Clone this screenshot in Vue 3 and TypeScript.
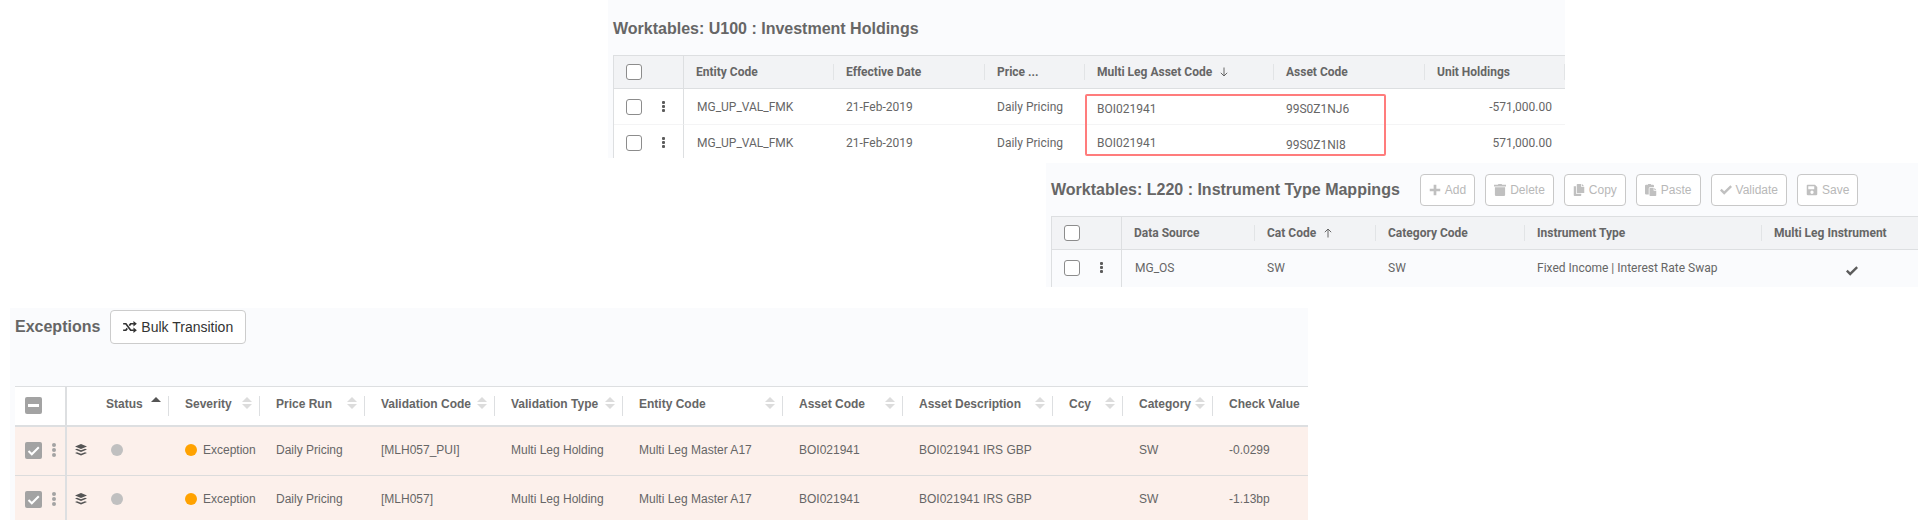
<script setup lang="ts">
interface Holding {
  entity: string
  date: string
  price: string
  multiLeg: string
  asset: string
  units: string
}

interface ExceptionColumn {
  label: string
  sort: 'asc' | 'none' | 'hidden'
  width: number
}

interface ExceptionRow {
  severity: string
  cells: string[]
}

const holdings: Holding[] = [
  { entity: 'MG_UP_VAL_FMK', date: '21-Feb-2019', price: 'Daily Pricing', multiLeg: 'BOI021941', asset: '99S0Z1NJ6', units: '-571,000.00' },
  { entity: 'MG_UP_VAL_FMK', date: '21-Feb-2019', price: 'Daily Pricing', multiLeg: 'BOI021941', asset: '99S0Z1NI8', units: '571,000.00' },
]

const actions: { label: string; icon: string }[] = [
  { label: 'Add', icon: 'M6.200 1h3.600v5.200H15v3.600H9.800V15H6.200V9.800H1V6.200h5.200z' },
  { label: 'Delete', icon: 'M0 1h5l1-1h4l1 1h5v2.200H0zM1.200 4.200h13.600V14.500a1.500 1.500 0 0 1-1.500 1.500H2.700a1.500 1.500 0 0 1-1.500-1.500z' },
  { label: 'Copy', icon: 'M6 0h5v4h4v8H5V1a1 1 0 0 1 1-1zM12 0l3 3h-3zM1 3h3v10h7v2a1 1 0 0 1-1 1H2a1 1 0 0 1-1-1z' },
  { label: 'Paste', icon: 'M1.500 1H4a2 2 0 0 1 4 0h2.500A1.500 1.500 0 0 1 12 2.500V4H7a2 2 0 0 0-2 2v8H1.500A1.500 1.500 0 0 1 0 12.500v-10A1.500 1.500 0 0 1 1.500 1zM7 5h4.500v4H15v6a1 1 0 0 1-1 1H7a1 1 0 0 1-1-1V6a1 1 0 0 1 1-1zM12.500 5L15 8h-2.500z' },
  { label: 'Validate', icon: 'M0 8.500L2.200 6.200 5.600 9.600 13.800 1.800 16 4 5.600 14.200z' },
  { label: 'Save', icon: 'M2 1h10l3 3v9.500a1.500 1.500 0 0 1-1.500 1.500h-11A1.500 1.500 0 0 1 1 13.500V2a1 1 0 0 1 1-1zM3 3v4h8V3zM8 8.800a2.200 2.200 0 1 0 0 4.400 2.200 2.200 0 0 0 0-4.400z' },
]

const exceptionColumns: ExceptionColumn[] = [
  { label: 'Status', sort: 'asc', width: 79 },
  { label: 'Severity', sort: 'none', width: 91 },
  { label: 'Price Run', sort: 'none', width: 105 },
  { label: 'Validation Code', sort: 'none', width: 130 },
  { label: 'Validation Type', sort: 'none', width: 128 },
  { label: 'Entity Code', sort: 'none', width: 160 },
  { label: 'Asset Code', sort: 'none', width: 120 },
  { label: 'Asset Description', sort: 'none', width: 150 },
  { label: 'Ccy', sort: 'none', width: 70 },
  { label: 'Category', sort: 'none', width: 90 },
  { label: 'Check Value', sort: 'hidden', width: 0 },
]

const exceptionRows: ExceptionRow[] = [
  { severity: 'Exception', cells: ['Daily Pricing', '[MLH057_PUI]', 'Multi Leg Holding', 'Multi Leg Master A17', 'BOI021941', 'BOI021941 IRS GBP', '', 'SW', '-0.0299'] },
  { severity: 'Exception', cells: ['Daily Pricing', '[MLH057]', 'Multi Leg Holding', 'Multi Leg Master A17', 'BOI021941', 'BOI021941 IRS GBP', '', 'SW', '-1.13bp'] },
]
</script>

<template>
  <main class="page">
    <section class="panel holdings">
      <h2 class="title">Worktables: U100 : Investment Holdings</h2>
      <div class="marked">
        <table class="grid">
          <colgroup>
            <col class="w-select" />
            <col class="w-150" />
            <col class="w-151" />
            <col class="w-100" />
            <col class="w-189" />
            <col class="w-151" />
            <col />
          </colgroup>
          <thead>
            <tr>
              <th class="pick"><input type="checkbox" class="tick" aria-label="Select all holdings" /></th>
              <th><span class="head">Entity Code</span></th>
              <th><span class="head">Effective Date</span></th>
              <th><span class="head">Price ...</span></th>
              <th>
                <span class="head">Multi Leg Asset Code
                  <svg class="arrow" viewBox="0 0 8 10" aria-hidden="true"><path d="M4 .5v8.500M.8 5.800L4 9l3.200-3.200" /></svg>
                </span>
              </th>
              <th><span class="head">Asset Code</span></th>
              <th><span class="head">Unit Holdings</span></th>
            </tr>
          </thead>
          <tbody>
            <tr v-for="(row, i) in holdings" :key="i">
              <td class="pick">
                <div class="pick-row">
                  <input type="checkbox" class="tick" :aria-label="`Select ${row.asset}`" />
                  <button type="button" class="kebab" :aria-label="`Menu for ${row.asset}`"><i></i><i></i><i></i></button>
                </div>
              </td>
              <td class="code">{{ row.entity }}</td>
              <td>{{ row.date }}</td>
              <td>{{ row.price }}</td>
              <td :class="{ low: i === 0 }">{{ row.multiLeg }}</td>
              <td class="low">{{ row.asset }}</td>
              <td class="num">{{ row.units }}</td>
            </tr>
          </tbody>
        </table>
        <div class="callout"></div>
      </div>
    </section>

    <section class="panel mappings">
      <div class="bar">
        <h2 class="title">Worktables: L220 : Instrument Type Mappings</h2>
        <div class="actions">
          <button v-for="a in actions" :key="a.label" type="button" class="action" disabled>
            <svg viewBox="0 0 16 16" aria-hidden="true"><path fill-rule="evenodd" :d="a.icon" /></svg>{{ a.label }}
          </button>
        </div>
      </div>
      <table class="grid">
        <colgroup>
          <col class="w-select" />
          <col class="w-133" />
          <col class="w-121" />
          <col class="w-149" />
          <col class="w-237" />
          <col />
        </colgroup>
        <thead>
          <tr>
            <th class="pick"><input type="checkbox" class="tick" aria-label="Select all mappings" /></th>
            <th><span class="head">Data Source</span></th>
            <th>
              <span class="head">Cat Code
                <svg class="arrow" viewBox="0 0 8 10" aria-hidden="true"><path d="M4 9.500V1M.8 4.200L4 1l3.200 3.200" /></svg>
              </span>
            </th>
            <th><span class="head">Category Code</span></th>
            <th><span class="head">Instrument Type</span></th>
            <th><span class="head open">Multi Leg Instrument</span></th>
          </tr>
        </thead>
        <tbody>
          <tr>
            <td class="pick">
              <div class="pick-row">
                <input type="checkbox" class="tick" aria-label="Select MG_OS" />
                <button type="button" class="kebab" aria-label="Menu for MG_OS"><i></i><i></i><i></i></button>
              </div>
            </td>
            <td class="code">MG_OS</td>
            <td>SW</td>
            <td>SW</td>
            <td>Fixed Income | Interest Rate Swap</td>
            <td class="flag low">
              <svg viewBox="0 0 16 16" role="img" aria-label="Yes"><path d="M0 8.500L2.200 6.200 5.600 9.600 13.800 1.800 16 4 5.600 14.200z" /></svg>
            </td>
          </tr>
        </tbody>
      </table>
    </section>

    <section class="panel exceptions">
      <div class="bar">
        <h2 class="title">Exceptions</h2>
        <button type="button" class="bulk">
          <svg viewBox="0 0 16 14" aria-hidden="true">
            <path class="line" d="M0 3.200h3.200L8.800 10.800H12.500M0 10.800h3.200l1.600-2.200M7.200 5.400L8.800 3.200H12.500" />
            <path d="M12 0l4 3.200-4 3.200zM12 7.600l4 3.200-4 3.200z" />
          </svg>Bulk Transition
        </button>
      </div>
      <table class="list">
        <colgroup>
          <col class="w-mark" />
          <col class="w-layers" />
          <col v-for="c in exceptionColumns" :key="c.label" :style="c.width ? { width: c.width + 'px' } : {}" />
        </colgroup>
        <thead>
          <tr>
            <th class="mark"><input type="checkbox" class="box partial" aria-label="Select all exceptions" /></th>
            <th></th>
            <th v-for="c in exceptionColumns" :key="c.label">
              <div class="head" :class="{ last: c.sort === 'hidden' }">
                {{ c.label }}
                <svg v-if="c.sort !== 'hidden'" class="sort" :class="c.sort" viewBox="0 0 10 12" aria-hidden="true">
                  <path d="M0 5L5 0l5 5z" />
                  <path v-if="c.sort === 'none'" d="M0 7l5 5 5-5z" />
                </svg>
              </div>
            </th>
          </tr>
        </thead>
        <tbody>
          <tr v-for="(row, i) in exceptionRows" :key="i">
            <td class="mark">
              <div class="mark-row">
                <input type="checkbox" class="box" checked :aria-label="`Select exception ${i + 1}`" />
                <button type="button" class="kebab soft" :aria-label="`Menu for exception ${i + 1}`"><i></i><i></i><i></i></button>
              </div>
            </td>
            <td class="layers">
              <svg viewBox="0 0 12 12" aria-hidden="true">
                <path d="M6 0l6 2.500-6 2.500-6-2.500zM0 5.500l2-.8 4 1.600 4-1.600 2 .8L6 8zM0 9l2-.8 4 1.600 4-1.600 2 .8-6 2.500z" />
              </svg>
            </td>
            <td class="state"><span class="dot"></span></td>
            <td><span class="severity"><span class="dot warn"></span>{{ row.severity }}</span></td>
            <td v-for="(cell, j) in row.cells" :key="j">{{ cell }}</td>
          </tr>
        </tbody>
      </table>
    </section>
  </main>
</template>

<style>
body {
  background: #fff;
}
</style>

<style scoped>
.page {
  display: grid;
  grid-template-columns:
    minmax(0, 10fr) minmax(0, 598fr) minmax(0, 438fr) minmax(0, 262fr)
    minmax(0, 257fr) minmax(0, 353fr) minmax(0, 10fr);
  color: #666;
  font-family: "Liberation Sans", Arial, sans-serif;
}

.panel {
  padding-left: 5px;
  overflow: hidden;
  background: #fafbfd;
}

.holdings {
  grid-column: 3 / 6;
}

.mappings {
  grid-column: 4 / 7;
  margin-top: 5px;
}

.exceptions {
  grid-column: 2 / 5;
  margin-top: 21px;
}

.title {
  margin: 0;
  font-size: 16px;
  line-height: 20px;
  font-weight: 700;
  white-space: nowrap;
}

.holdings .title {
  padding: 19px 0 16px;
}

.bar {
  display: flex;
  align-items: center;
}

table {
  width: 100%;
  table-layout: fixed;
  border-collapse: separate;
  border-spacing: 0;
}

th,
td {
  box-sizing: border-box;
  padding: 0;
  text-align: left;
  white-space: nowrap;
}

/* Worktable grids */
.grid {
  border-top: 1px solid #dddfe1;
  border-left: 1px solid #dddfe1;
  font-family: Roboto, "Liberation Sans", sans-serif;
  font-size: 12px;
  line-height: 16px;
}

.grid th {
  height: 33px;
  padding-left: 12px;
  border-bottom: 1px solid #dddfe1;
  background: #f2f3f5;
  font-weight: 700;
}

.grid td {
  height: 36px;
  padding-left: 12px;
  border-bottom: 1px solid #f4f4f5;
}

.grid .code {
  padding-left: 13px;
}

.grid .low {
  padding-top: 5px;
}

.grid .num {
  padding-right: 13px;
  text-align: right;
}

.grid th .head {
  display: flex;
  align-items: center;
  height: 16px;
  border-right: 1px solid #e2e4e6;
}

.grid th .open {
  border-right: 0;
}

.grid .pick {
  padding-left: 12px;
  border-right: 1px solid #dddfe1;
}

.pick-row {
  display: flex;
  align-items: center;
  gap: 20px;
}

.holdings .grid td {
  background: #fff;
}

.marked {
  position: relative;
  margin-bottom: -3px;
}

.callout {
  position: absolute;
  top: 39px;
  left: 472px;
  box-sizing: border-box;
  width: 301px;
  height: 62px;
  border: 2px solid #ff7c7c;
  border-radius: 2px;
}

.mappings .grid td {
  height: 37px;
  padding-bottom: 2px;
  border-bottom: 0;
}

.w-select { width: 70px; }
.w-100 { width: 100px; }
.w-121 { width: 121px; }
.w-133 { width: 133px; }
.w-149 { width: 149px; }
.w-150 { width: 150px; }
.w-151 { width: 151px; }
.w-189 { width: 189px; }
.w-237 { width: 237px; }

.tick {
  appearance: none;
  display: block;
  box-sizing: border-box;
  width: 16px;
  height: 16px;
  margin: 0;
  border: 1px solid #8c8c8c;
  border-radius: 3px;
  background: #fff;
}

.kebab {
  display: flex;
  flex-direction: column;
  gap: 1px;
  padding: 0;
  border: 0;
  background: none;
}

.kebab i {
  width: 3px;
  height: 3px;
  border-radius: 1px;
  background: #5c5c5c;
}

.arrow {
  width: 8px;
  height: 10px;
  margin-left: 8px;
  fill: none;
  stroke: #666;
}

.grid .flag {
  padding-left: 24px;
  text-align: center;
}

.flag svg {
  width: 12px;
  height: 12px;
  vertical-align: middle;
  fill: #5c5c5c;
}

.mappings .bar {
  gap: 20px;
  padding: 11px 0 10px;
}

.actions {
  display: flex;
  gap: 10px;
}

.action {
  display: flex;
  align-items: center;
  gap: 4px;
  height: 32px;
  padding: 0 8px;
  border: 1px solid #c8c8c8;
  border-radius: 4px;
  background: #fff;
  color: #b8b8b8;
  font-family: "Liberation Sans", Arial, sans-serif;
  font-size: 12px;
}

.action svg {
  width: 12px;
  height: 12px;
  fill: #c0c0c0;
}

/* Exceptions list */
.exceptions .bar {
  gap: 10px;
  padding: 2px 0 42px;
}

.bulk {
  display: flex;
  align-items: center;
  gap: 4px;
  height: 34px;
  padding: 0 12px;
  border: 1px solid #ccc;
  border-radius: 4px;
  background: #fff;
  color: #333;
  font-family: "Liberation Sans", Arial, sans-serif;
  font-size: 14px;
}

.bulk svg {
  width: 14px;
  height: 12px;
  fill: #333;
}

.bulk .line {
  fill: none;
  stroke: #333;
  stroke-width: 2;
}

.list {
  margin-bottom: -5px;
  border-top: 1px solid #dddfe1;
  font-size: 12px;
  line-height: 16px;
}

.list th {
  height: 40px;
  border-bottom: 2px solid #dddfe1;
  background: #fff;
}

.list td {
  height: 49px;
  padding-bottom: 2px;
  padding-left: 16px;
  border-bottom: 1px solid #dcdcdc;
  background: #fcf0eb;
}

.list .head {
  display: flex;
  justify-content: space-between;
  box-sizing: border-box;
  height: 20px;
  padding: 0 7px 0 16px;
  border-right: 1px solid #dddfe1;
}

.list .last {
  border-right: 0;
}

.list .mark {
  padding-bottom: 2px;
  padding-left: 10px;
  border-right: 2px solid #dddfe1;
}

.mark-row {
  display: flex;
  align-items: center;
  gap: 10px;
}

.list .layers {
  padding-left: 8px;
}

.layers svg {
  display: block;
  width: 12px;
  height: 12px;
  fill: #555;
}

.w-mark { width: 52px; }
.w-layers { width: 23px; }

.sort {
  width: 10px;
  height: 12px;
  margin-top: 1px;
  fill: #dcdcdc;
}

.sort.asc {
  fill: #555;
}

.box {
  appearance: none;
  display: block;
  width: 17px;
  height: 17px;
  margin: 0;
  border-radius: 2px;
  background: #a3a3a3;
}

.box:checked {
  background: #a3a3a3 url("data:image/svg+xml,%3Csvg xmlns='http://www.w3.org/2000/svg' viewBox='0 0 17 17'%3E%3Cpath d='M3.500 9l3.300 3.300 7-7' fill='none' stroke='%23fff' stroke-width='2'/%3E%3C/svg%3E");
}

.partial {
  background: linear-gradient(#fff, #fff) center / 11px 3px no-repeat #a3a3a3;
}

.kebab.soft i {
  width: 4px;
  height: 4px;
  border-radius: 2px;
  background: #a3a3a3;
}

.dot {
  display: block;
  flex: none;
  width: 12px;
  height: 12px;
  border-radius: 6px;
  background: #c0c0c0;
}

.list .state {
  padding-left: 21px;
}

.dot.warn {
  background: #ffa200;
}

.severity {
  display: flex;
  align-items: center;
  gap: 6px;
}
</style>
